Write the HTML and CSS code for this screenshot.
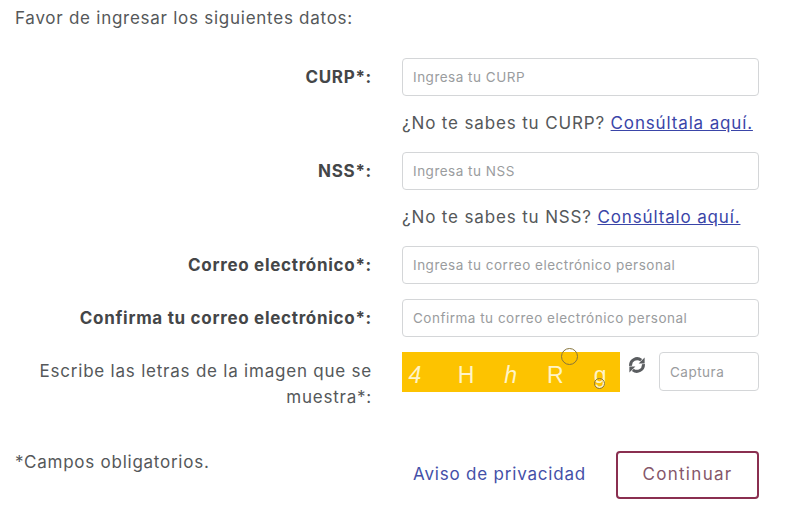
FILE: index.html
```html
<!DOCTYPE html>
<html lang="es">
<head>
<meta charset="utf-8">
<title>Datos</title>
<link rel="stylesheet" href="styles.css">
</head>
<body>
<main class="page">
  <p class="intro">Favor de ingresar los siguientes datos:</p>
  <form class="form">
    <label class="label strong">CURP*:</label>
    <input class="field" placeholder="Ingresa tu CURP">
    <p class="hint">¿No te sabes tu CURP? <a href="#">Consúltala aquí.</a></p>

    <label class="label strong">NSS*:</label>
    <input class="field" placeholder="Ingresa tu NSS">
    <p class="hint">¿No te sabes tu NSS? <a href="#">Consúltalo aquí.</a></p>

    <label class="label strong">Correo electrónico*:</label>
    <input class="field" placeholder="Ingresa tu correo electrónico personal">

    <label class="label strong">Confirma tu correo electrónico*:</label>
    <input class="field" placeholder="Confirma tu correo electrónico personal">

    <label class="label captcha-label">Escribe las letras de la imagen que se muestra*:</label>
    <div class="captcha-row">
      <div class="captcha-img">
        <span class="first">4</span><span class="up">H</span><span>h</span><span class="up">R</span><span class="up">g</span>
        <i class="ring ring-top"></i>
        <i class="ring ring-bottom"></i>
      </div>
      <svg class="refresh" viewBox="0 0 18 16" width="18" height="16" aria-hidden="true">
        <path d="M2.6 8.8A6.5 6.5 0 0 1 13.2 3.2" fill="none" stroke="#5a5d60" stroke-width="3"/>
        <path d="M15.4 7.2A6.5 6.5 0 0 1 4.8 12.8" fill="none" stroke="#5a5d60" stroke-width="3"/>
        <path d="M16.6 .6v6h-6z" fill="#5a5d60"/>
        <path d="M1.4 15.4v-6h6z" fill="#5a5d60"/>
      </svg>
      <input class="field captura" placeholder="Captura">
    </div>
  </form>
  <footer class="foot">
    <p class="required">*Campos obligatorios.</p>
    <div class="actions">
      <a class="privacy" href="#">Aviso de privacidad</a>
      <button class="continue" type="button">Continuar</button>
    </div>
  </footer>
</main>
</body>
</html>
```

FILE: styles.css
```css
* { box-sizing: border-box; }
html, body { margin: 0; background: #fff; }
body {
  font-family: Inter, "Open Sans", "Liberation Sans", sans-serif;
  color: #55585a;
  width: 791px;
  height: 512px;
  overflow: hidden;
}
.page { padding: 8px 32px 0 15px; }
.intro { margin: 0; font-size: 17px; letter-spacing: 0.74px; line-height: 20px; }
.form {
  margin-top: 30px;
  display: grid;
  grid-template-columns: 357px 357px;
  column-gap: 30px;
  align-items: start;
}
.label {
  text-align: right;
  font-size: 17px;
  letter-spacing: 0.78px;
  line-height: 26px;
  padding-top: 6px;
}
.strong { font-weight: 700; color: #444648; letter-spacing: 0.7px; }
.field {
  display: block;
  width: 100%;
  height: 38px;
  padding: 0 10px;
  border: 1px solid #d4d6d8;
  border-radius: 4px;
  background: #fff;
  font: 13.5px Inter, "Open Sans", sans-serif;
  letter-spacing: 0.5px;
  color: #55585a;
  margin-bottom: 15px;
}
.field::placeholder { color: #9a9c9e; opacity: 1; }
.hint {
  grid-column: 2;
  margin: 1px 0 18px;
  font-size: 17px;
  letter-spacing: 0.85px;
  line-height: 22px;
  white-space: nowrap;
}
.hint a { color: #3a45a8; }
.captcha-label { font-weight: 400; color: #55585a; }
.captcha-row { display: flex; align-items: flex-start; }
.captcha-img {
  position: relative;
  width: 218px;
  height: 40px;
  background: #fdc300;
  display: flex;
  gap: 22.7px;
  padding: 10px 0 0 2px;
  font: 23px/26px "Liberation Sans", sans-serif;
  color: #fff4c8;
}
.captcha-img span { font-style: italic; width: 22px; text-align: center; }
.captcha-img .up { font-style: normal; }
.captcha-img .first { margin-right: 6.3px; }
.ring {
  position: absolute;
  width: 17px;
  height: 17px;
  border: 1px solid #86743a;
  border-radius: 50%;
}
.ring-top { left: 159px; top: -4px; }
.ring-bottom { left: 192px; top: 26px; width: 11px; height: 11px; }
.refresh { margin: 5px 0 0 8px; flex: none; }
.captura { width: 100px; height: 39px; margin: 0 0 0 13px; }
.foot {
  display: flex;
  justify-content: space-between;
  align-items: flex-start;
  margin-top: 41px;
}
.required { margin: 0; font-size: 17px; letter-spacing: 0.75px; line-height: 22px; }
.actions { display: flex; align-items: center; gap: 30px; }
.privacy { color: #4450a8; font-size: 17px; letter-spacing: 0.8px; text-decoration: none; margin-top: -2px; }
.continue {
  width: 143px;
  height: 48px;
  padding: 0 0 2px;
  background: #fff;
  border: 2px solid #8a2f50;
  border-radius: 4px;
  color: #85566a;
  font: 17px Inter, "Open Sans", sans-serif;
  letter-spacing: 1.3px;
}
```
